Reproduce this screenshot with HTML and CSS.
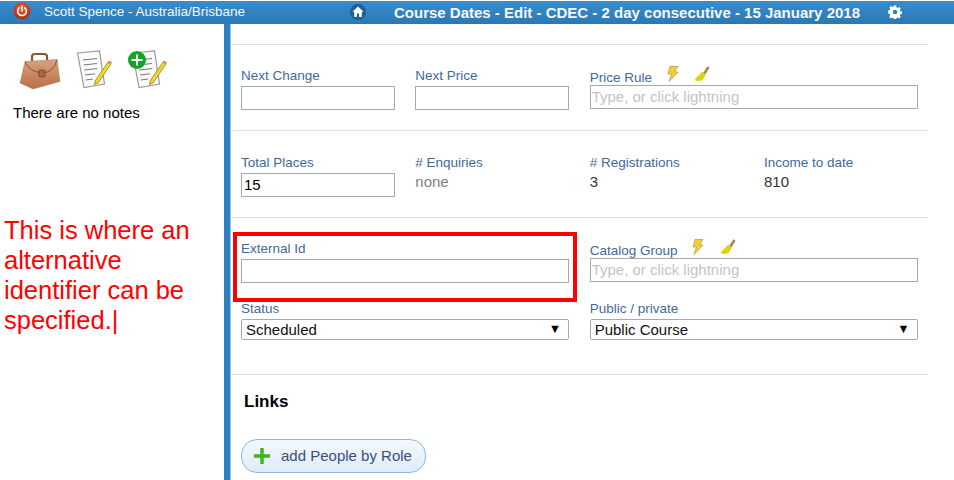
FILE: index.html
```html
<!DOCTYPE html>
<html lang="en">
<head>
<meta charset="utf-8">
<title>Course Dates - Edit</title>
<link rel="stylesheet" href="styles.css">
</head>
<body>
<header class="topbar">
  <div class="user">
    <svg class="power" viewBox="0 0 18 18" width="18" height="18">
      <defs><radialGradient id="pw" cx="50%" cy="35%" r="65%"><stop offset="0" stop-color="#f0643a"/><stop offset="1" stop-color="#a82c10"/></radialGradient></defs>
      <circle cx="9" cy="9" r="8.5" fill="url(#pw)"/>
      <path d="M6.2 5.8a4.4 4.4 0 1 0 5.6 0" fill="none" stroke="#fff" stroke-width="1.5" stroke-linecap="round"/>
      <path d="M9 3.9v5" stroke="#fff" stroke-width="1.5" stroke-linecap="round"/>
    </svg>
    <span class="username">Scott Spence - Australia/Brisbane</span>
  </div>
  <svg class="home" viewBox="0 0 16 16" width="16" height="16">
    <circle cx="8" cy="8" r="8" fill="#1d5f96"/>
    <path d="M8 2.6 2.4 7.8h1.8v5.2h2.7V9.6h2.2V13h2.7V7.8h1.8z" fill="#fff"/>
  </svg>
  <h1 class="title">Course Dates - Edit - CDEC - 2 day consecutive - 15 January 2018</h1>
  <svg class="gear" viewBox="0 0 14 14" width="14" height="14">
    <path d="M5.8.8h2.4l.3 1.8 1.1.5 1.5-1 1.7 1.7-1 1.5.5 1.1 1.8.3v2.4l-1.8.3-.5 1.1 1 1.5-1.7 1.7-1.5-1-1.1.5-.3 1.8H5.800l-.3-1.800-1.100-.5-1.500 1-1.700-1.700 1-1.500-.5-1.100L0 8.200V5.800l1.800-.3.500-1.100-1-1.500L3 1.200l1.500 1 1.100-.5z" fill="#fff" transform="translate(0 -.2)"/>
    <circle cx="7" cy="7" r="2.200" fill="#2b7dbc"/>
  </svg>
</header>

<div class="page">
  <aside class="side">
    <div class="side-icons">
      <svg class="ic-case" viewBox="0 0 42 38" width="42" height="38">
        <defs><linearGradient id="cs" x1="0" y1="0" x2="0" y2="1"><stop offset="0" stop-color="#d9a17e"/><stop offset="1" stop-color="#b96f46"/></linearGradient></defs>
        <path d="M13 9V4.500Q13 2 16 2h9q3 0 3 2.500V9" fill="none" stroke="#8e5232" stroke-width="2.200"/>
        <path d="M6 9.500 38 7.500l3 22-27 7.500L1 31z" fill="url(#cs)" stroke="#a97a5e" stroke-width=".5"/>
        <path d="M6 9.500Q10 20 24 21 35 20 38 7.500" fill="none" stroke="#7d4a2c" stroke-width=".9"/>
        <rect x="20" y="18" width="6" height="7" rx="1" fill="#a76640" stroke="#6e4026" stroke-width=".8"/>
      </svg>
      <svg class="ic-note" viewBox="0 0 36 40" width="36" height="40">
        <path d="M1.500 3 23.500 1l5 33-20.500 3.500z" fill="#fbfbfb" stroke="#9a9a9a" stroke-width="1.200"/>
        <path d="M7 10l14-1.500M7.600 15 21 13.500M8.300 20l13-1.500M9 25l10-1.200M9.700 30 17 29" stroke="#777" stroke-width="1"/>
        <path d="M19 31 32 12l3 2-13 19-3.500 1.500z" fill="#f4d92c" stroke="#7d7020" stroke-width=".7"/>
        <path d="M32 12l1-1.400 3 2-1 1.400z" fill="#d77a78"/>
      </svg>
      <span class="note-add">
        <svg class="ic-note" viewBox="0 0 36 40" width="36" height="40">
          <path d="M1.500 3 23.500 1l5 33-20.500 3.500z" fill="#fbfbfb" stroke="#9a9a9a" stroke-width="1.200"/>
          <path d="M7 10l14-1.500M7.600 15 21 13.500M8.300 20l13-1.500M9 25l10-1.200M9.700 30 17 29" stroke="#777" stroke-width="1"/>
          <path d="M19 31 32 12l3 2-13 19-3.500 1.500z" fill="#f4d92c" stroke="#7d7020" stroke-width=".7"/>
          <path d="M32 12l1-1.400 3 2-1 1.400z" fill="#d77a78"/>
        </svg>
        <svg class="green-plus" viewBox="0 0 18 18" width="18" height="18">
          <circle cx="9" cy="9" r="9" fill="#12a52c"/>
          <path d="M9 3.500v11M3.500 9h11" stroke="#fff" stroke-width="2"/>
        </svg>
      </span>
    </div>
    <p class="no-notes">There are no notes</p>
    <p class="annotation">This is where an alternative identifier can be specified.|</p>
  </aside>
  <div class="rail"></div>
  <main class="main">
    <section class="row row-a">
      <div class="field"><label class="lab">Next Change</label><div class="input"></div></div>
      <div class="field"><label class="lab">Next Price</label><div class="input"></div></div>
      <div class="field span2 up"><label class="lab">Price Rule
        <svg class="bolt" viewBox="0 0 12 16" width="12" height="16"><path d="M3 .5h8L7.500 6H11L2 15.500 4.500 8H1z" fill="#f3cf3c" stroke="#b8922a" stroke-width=".7"/></svg>
        <svg class="broom" viewBox="0 0 16 16" width="16" height="16"><path d="M14.500 1 10 8" stroke="#a5865a" stroke-width="2.600"/><path d="M7.500 6c2 .5 3.800 1.800 4 3.500L8.500 14c-2.500 1.300-6 1.200-7.500.3 0-3 4-3.800 6.500-8.300z" fill="#dfd30a"/></svg>
      </label><div class="input ph">Type, or click lightning</div></div>
    </section>
    <section class="row row-b">
      <div class="field"><label class="lab">Total Places</label><div class="input val">15</div></div>
      <div class="field"><label class="lab">#&nbsp;Enquiries</label><div class="static grey">none</div></div>
      <div class="field"><label class="lab">#&nbsp;Registrations</label><div class="static">3</div></div>
      <div class="field"><label class="lab">Income to date</label><div class="static">810</div></div>
    </section>
    <section class="row row-c">
      <div class="field span2 ext"><label class="lab">External Id</label><div class="input"></div></div>
      <div class="field span2 up"><label class="lab">Catalog Group
        <svg class="bolt" viewBox="0 0 12 16" width="12" height="16"><path d="M3 .5h8L7.500 6H11L2 15.500 4.500 8H1z" fill="#f3cf3c" stroke="#b8922a" stroke-width=".7"/></svg>
        <svg class="broom" viewBox="0 0 16 16" width="16" height="16"><path d="M14.500 1 10 8" stroke="#a5865a" stroke-width="2.600"/><path d="M7.500 6c2 .5 3.800 1.800 4 3.500L8.500 14c-2.500 1.300-6 1.200-7.500.3 0-3 4-3.800 6.500-8.300z" fill="#dfd30a"/></svg>
      </label><div class="input ph">Type, or click lightning</div></div>
      <div class="field span2 sel-field"><label class="lab">Status</label><div class="select">Scheduled<span class="arrow">▼</span></div></div>
      <div class="field span2 sel-field"><label class="lab">Public / private</label><div class="select">Public Course<span class="arrow">▼</span></div></div>
    </section>
    <section class="links">
      <h2 class="links-title">Links</h2>
      <button class="add-btn" type="button">
        <svg class="plus" viewBox="0 0 18 18" width="18" height="18"><path d="M9 1v16M1 9h16" stroke="#3fb41f" stroke-width="3.400"/></svg>
        <span class="add-label">add People by Role</span>
      </button>
    </section>
    <div class="redbox"></div>
  </main>
</div>
</body>
</html>
```
FILE: styles.css
```css
* { box-sizing: border-box; }
html, body { margin: 0; height: 480px; overflow: hidden; background: #fff; }
body { font-family: "Liberation Sans", Arial, sans-serif; font-size: 14px; color: #000; }

.topbar {
  height: 23px;
  margin-top: 1px;
  background: linear-gradient(#3a8ccb, #2a79b7);
  display: flex;
  align-items: center;
  color: #fff;
  position: relative;
}
.user { display: flex; align-items: center; width: 350px; padding-left: 13px; margin-top: -3px; }
.username { font-size: 13.500px; margin-left: 13px; color: #f2f7fb; white-space: nowrap; }
.home { flex: none; margin-top: -1px; }
.title { margin: 0 0 0 28px; font-size: 15px; font-weight: bold; white-space: nowrap; color: #f4f8fb; }
.gear { margin-left: 28px; flex: none; margin-top: -1px; }

.page { display: flex; height: 456px; }
.side { width: 224px; flex: none; padding: 0 4px; }
.rail { flex: none; background: #2f80bf; border-right: 1px solid #9fc6e3; width: 7px; }
.main { width: 697px; position: relative; flex: none; }

.side-icons { display: flex; align-items: flex-start; padding: 26px 0 0 15px; height: 71px; }
.ic-case { margin-top: 2px; }
.ic-note { display: block; }
.side-icons > .ic-note { margin-left: 15px; }
.note-add { position: relative; margin-left: 19px; display: block; }
.green-plus { position: absolute; left: -3px; top: 1px; }
.no-notes { margin: 10px 0 0 9px; font-size: 15px; line-height: 16px; }
.annotation { margin: 94px 0 0; width: 200px; font-size: 25.500px; line-height: 30px; color: #f00; }

.row {
  display: grid;
  grid-template-columns: repeat(4, 174.330px);
  padding-left: 10px;
  border-top: 1px solid #e1e1e1;
}
.row-a { margin-top: 20px; height: 86px; padding-top: 22px; }
.row-b { height: 87px; padding-top: 23px; }
.row-c { height: 157px; padding-top: 22px; grid-auto-rows: min-content; }
.field { min-width: 0; }
.span2 { grid-column: span 2; }
.lab { display: block; color: #3f6a99; font-size: 13.500px; line-height: 17px; }
.input {
  width: 154px;
  height: 24px;
  margin-top: 2px;
  border: 1px solid #a8a8a8;
  font-size: 15px;
  line-height: 22px;
  padding-left: 1px;
}
.span2 .input { width: 328px; }
.up { margin-top: -1px; }
.up .lab { height: 19px; line-height: 16px; }
.up .input { margin-top: 0; }
.val { padding-left: 2px; }
.ph { color: #c4c4c4; }
.static { margin-top: 3px; font-size: 15px; line-height: 16px; color: #333; }
.grey { color: #808080; }
.sel-field { margin-top: 17px; }
.select {
  width: 328px;
  height: 21px;
  margin-top: 2px;
  border: 1px solid #a8a8a8;
  border-radius: 2px;
  font-size: 15px;
  line-height: 19px;
  padding: 0 7px 0 4px;
  display: flex;
  justify-content: space-between;
  color: #111;
}
.arrow { font-size: 12.500px; color: #000; }
.bolt { margin-left: 11px; }
.broom { margin-left: 12px; }

.links { border-top: 1px solid #e1e1e1; padding: 17px 0 0 10px; }
.links-title { margin: 0 0 0 3px; font-size: 17px; line-height: 20px; font-weight: bold; }
.add-btn {
  display: flex;
  align-items: center;
  margin-top: 27px;
  width: 185px;
  height: 34px;
  padding: 0 0 0 11px;
  border: 1px solid #8cb7dc;
  border-radius: 16px;
  background: linear-gradient(#f4f8fd, #dfebfb);
  font: 15px "Liberation Sans", Arial, sans-serif;
  color: #3a5078;
  white-space: nowrap;
}
.add-label { margin-top: -2px; }
.plus { margin-right: 10px; flex: none; }
.redbox {
  position: absolute;
  left: 2px;
  top: 208px;
  width: 344px;
  height: 70px;
  border: 4px solid #f00;
}
```
